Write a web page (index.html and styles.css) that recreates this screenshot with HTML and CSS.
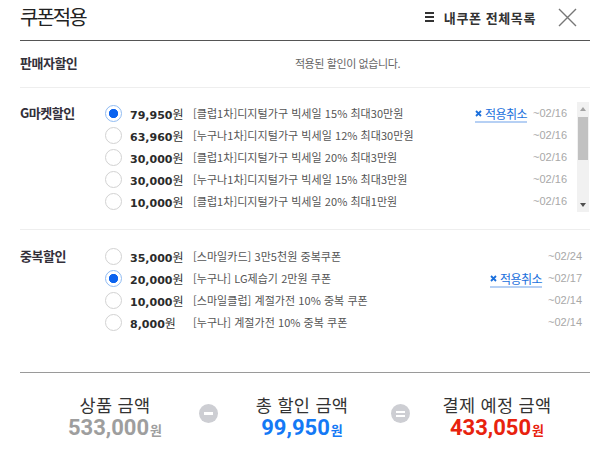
FILE: index.html
```html
<!DOCTYPE html>
<html lang="ko">
<head>
<meta charset="utf-8">
<title>쿠폰적용</title>
<link rel="stylesheet" href="styles.css">
</head>
<body>
<div class="popup">
  <header class="head">
    <h1 class="title">쿠폰적용</h1>
    <a class="mylist" href="#"><span class="burger"><i></i><i></i><i></i></span>내쿠폰 전체목록</a>
    <button class="close" type="button" aria-label="닫기">
      <svg width="19" height="19" viewBox="0 0 19 19"><path d="M1 1L18 18M18 1L1 18" stroke="#777" stroke-width="1.4" fill="none"/></svg>
    </button>
  </header>

  <section class="sec sec-seller">
    <h2 class="label">판매자할인</h2>
    <p class="empty">적용된 할인이 없습니다.</p>
  </section>

  <section class="sec sec-gm">
    <h2 class="label">G마켓할인</h2>
    <div class="scrollbox">
      <ul class="list list-gm">
        <li class="row"><span class="radio on"></span><span class="amt"><b>79,950</b>원</span><span class="desc">[클럽1차]디지털가구 빅세일 15% 최대30만원</span><a class="cancel" href="#"><svg width="7" height="7" viewBox="0 0 7 7"><path d="M1 1L6 6M6 1L1 6" stroke="#1a6fdc" stroke-width="1.8"/></svg>적용취소</a><span class="date">~02/16</span></li>
        <li class="row"><span class="radio"></span><span class="amt"><b>63,960</b>원</span><span class="desc">[누구나1차]디지털가구 빅세일 12% 최대30만원</span><span class="date">~02/16</span></li>
        <li class="row"><span class="radio"></span><span class="amt"><b>30,000</b>원</span><span class="desc">[클럽1차]디지털가구 빅세일 20% 최대3만원</span><span class="date">~02/16</span></li>
        <li class="row"><span class="radio"></span><span class="amt"><b>30,000</b>원</span><span class="desc">[누구나1차]디지털가구 빅세일 15% 최대3만원</span><span class="date">~02/16</span></li>
        <li class="row"><span class="radio"></span><span class="amt"><b>10,000</b>원</span><span class="desc">[클럽1차]디지털가구 빅세일 20% 최대1만원</span><span class="date">~02/16</span></li>
      </ul>
      <div class="sbar">
        <span class="sbtn"><i class="tri up"></i></span>
        <span class="thumb"></span>
        <span class="track"></span>
        <span class="sbtn"><i class="tri down"></i></span>
      </div>
    </div>
  </section>

  <section class="sec sec-dup">
    <h2 class="label">중복할인</h2>
    <ul class="list list-dup">
      <li class="row"><span class="radio"></span><span class="amt"><b>35,000</b>원</span><span class="desc">[스마일카드] 3만5천원 중복쿠폰</span><span class="date">~02/24</span></li>
      <li class="row"><span class="radio on"></span><span class="amt"><b>20,000</b>원</span><span class="desc">[누구나] LG제습기 2만원 쿠폰</span><a class="cancel" href="#"><svg width="7" height="7" viewBox="0 0 7 7"><path d="M1 1L6 6M6 1L1 6" stroke="#1a6fdc" stroke-width="1.8"/></svg>적용취소</a><span class="date">~02/17</span></li>
      <li class="row"><span class="radio"></span><span class="amt"><b>10,000</b>원</span><span class="desc">[스마일클럽] 계절가전 10% 중복 쿠폰</span><span class="date">~02/14</span></li>
      <li class="row"><span class="radio"></span><span class="amt"><b>8,000</b>원</span><span class="desc">[누구나] 계절가전 10% 중복 쿠폰</span><span class="date">~02/14</span></li>
    </ul>
  </section>

  <footer class="sum">
    <div class="sum-col">
      <div class="sum-label">상품 금액</div>
      <div class="sum-val gray">533,000<small>원</small></div>
    </div>
    <span class="op minus"><i></i></span>
    <div class="sum-col">
      <div class="sum-label">총 할인 금액</div>
      <div class="sum-val blue">99,950<small>원</small></div>
    </div>
    <span class="op equal"><i></i><i></i></span>
    <div class="sum-col">
      <div class="sum-label">결제 예정 금액</div>
      <div class="sum-val red">433,050<small>원</small></div>
    </div>
  </footer>
</div>
</body>
</html>
```
FILE: styles.css
```css
* { box-sizing: border-box; }
html, body { margin: 0; padding: 0; background: #fff; }
body {
  font-family: "Noto Sans CJK KR", "Noto Sans", sans-serif;
  color: #333;
}
.popup {
  width: 600px;
  padding: 0 10px 0 20px;
}

/* header */
.head {
  display: flex;
  align-items: center;
  height: 41px;
  padding-bottom: 6px;
  border-bottom: 1px solid #555;
}
.title {
  flex: 1;
  margin: 0;
  font-size: 20px;
  font-weight: 400;
  letter-spacing: -2px;
  color: #222;
  line-height: 26px;
}
.mylist {
  display: flex;
  align-items: center;
  font-size: 13px;
  font-weight: 700;
  color: #333;
  text-decoration: none;
  letter-spacing: 0.6px;
}
.burger {
  display: flex;
  flex-direction: column;
  gap: 2px;
  width: 9px;
  margin-right: 10px;
}
.burger i {
  display: block;
  height: 2px;
  background: #333;
}
.close {
  display: flex;
  width: 19px;
  height: 19px;
  margin: 0 13px 0 22px;
  padding: 0;
  border: 0;
  background: none;
}

/* sections */
.sec {
  display: flex;
  align-items: flex-start;
  border-bottom: 1px solid #eee;
}
.label {
  flex: none;
  width: 85px;
  margin: 0;
  font-size: 13px;
  font-weight: 700;
  line-height: 22px;
  color: #33303a;
  letter-spacing: -0.5px;
}
.sec-seller { padding: 11px 0 13px; }
.empty {
  flex: 1;
  margin: 0;
  text-align: center;
  font-size: 11px;
  line-height: 22px;
  color: #666;
  letter-spacing: -0.4px;
}
.sec-gm { padding: 14px 0 17px; }
.sec-dup { padding: 15px 0 39px; border-bottom: 0; }

.scrollbox {
  flex: 1;
  display: flex;
  height: 110px;
}
.list {
  flex: 1;
  margin: 0;
  padding: 0;
  list-style: none;
  overflow: hidden;
}
.list-gm { padding-right: 10px; }
.list-dup { padding-right: 8px; }

.row {
  display: flex;
  align-items: center;
  height: 22px;
  white-space: nowrap;
}
.radio {
  flex: none;
  width: 17px;
  height: 17px;
  margin-right: 8px;
  border: 1px solid #d2d2d2;
  border-radius: 50%;
  background: #fff;
}
.radio.on {
  border-color: #90bbf2;
  background: radial-gradient(circle, #0b63ef 0 4.3px, #fff 5px);
}
.amt {
  flex: none;
  width: 63px;
  font-size: 12px;
  color: #333;
}
.amt b {
  font-family: "DejaVu Sans", sans-serif;
  font-size: 11px;
  font-weight: 700;
  color: #2b2b2b;
}
.desc {
  flex: 1;
  font-size: 11px;
  color: #555;
  letter-spacing: 0.05px;
}
.cancel {
  display: flex;
  align-items: center;
  gap: 3px;
  margin-right: 6px;
  padding-top: 3px;
  font-size: 12px;
  line-height: 14px;
  letter-spacing: -0.5px;
  color: #1a6fdc;
  text-decoration: none;
  border-bottom: 2px solid #b6d0f4;
}
.date {
  flex: none;
  font-family: "Liberation Sans", sans-serif;
  font-size: 11px;
  color: #a8a8a8;
}

/* fake scrollbar */
.sbar {
  flex: none;
  display: flex;
  flex-direction: column;
  width: 12px;
  margin-right: 1px;
  background: #f1f1f1;
}
.sbtn {
  flex: none;
  height: 14px;
  display: flex;
  align-items: center;
  justify-content: center;
}
.tri {
  width: 0;
  height: 0;
  border-left: 3.5px solid transparent;
  border-right: 3.5px solid transparent;
}
.tri.up { border-bottom: 4px solid #a3a3a3; }
.tri.down { border-top: 4px solid #505050; }
.thumb {
  flex: none;
  height: 43px;
  margin: 1px 1px 0;
  background: #c1c1c1;
}
.track { flex: 1; }

/* summary */
.sum {
  display: grid;
  grid-template-columns: 150px 36px 152px 44px 150px;
  padding: 21px 0 0 20px;
  border-top: 1px solid #9a9a9a;
}
.sum-col { text-align: center; }
.sum-label {
  font-size: 17.5px;
  line-height: 22px;
  color: #333;
  letter-spacing: 0.3px;
}
.sum-val {
  font-family: Roboto, "Liberation Sans", sans-serif;
  font-weight: 700;
  font-size: 22px;
  line-height: 24px;
}
.sum-val small {
  font-family: "Noto Sans CJK KR", sans-serif;
  font-size: 13px;
  margin-left: 1px;
}
.gray { color: #9e9e9e; }
.blue { color: #1479f5; }
.red { color: #e8220e; }
.op {
  justify-self: center;
  align-self: start;
  margin-top: 10px;
  width: 19px;
  height: 19px;
  border-radius: 50%;
  background: #cdced3;
  display: flex;
  flex-direction: column;
  align-items: center;
  justify-content: center;
  gap: 2px;
}
.op i {
  display: block;
  width: 9px;
  height: 2px;
  background: #fff;
}
.op.minus i { height: 3px; }
```
